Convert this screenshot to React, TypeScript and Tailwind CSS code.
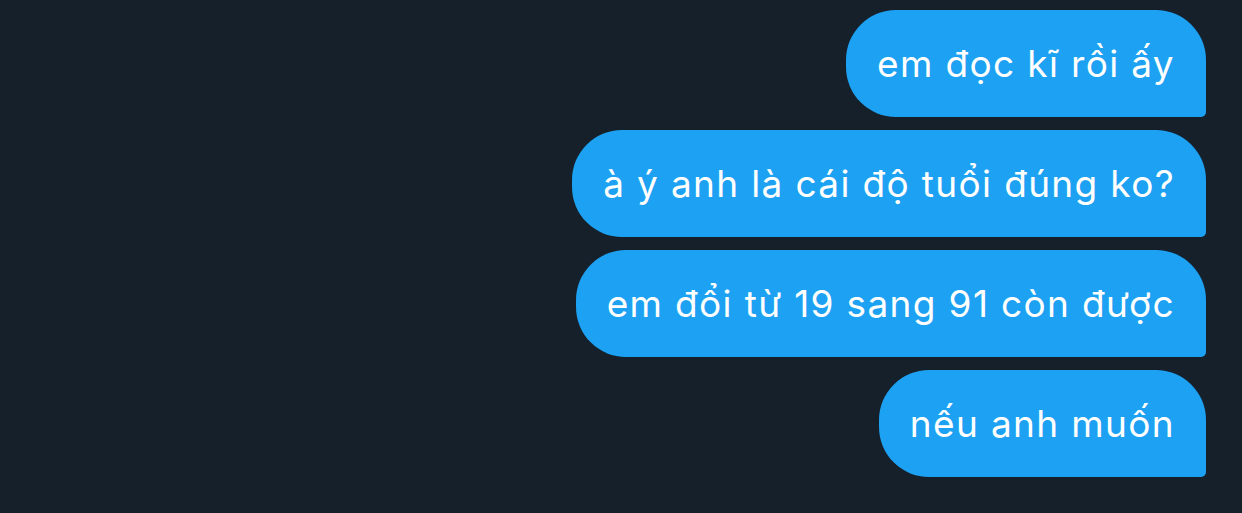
import React from 'react';

const messages = [
  'em đọc kĩ rồi ấy',
  'à ý anh là cái độ tuổi đúng ko?',
  'em đổi từ 19 sang 91 còn được',
  'nếu anh muốn',
];

export default function App() {
  return (
    <div className="min-h-screen w-full bg-[#15202b] pt-[10px] pr-[36px] font-['Inter','Noto_Sans',sans-serif]">
      <div className="flex flex-col items-end gap-[13px]">
        {messages.map((msg) => (
          <div
            key={msg}
            className="rounded-[50px] rounded-br-[5px] bg-[#1da1f2] pl-[31px] pr-[31px] py-[30px] text-[37px] leading-[47px] tracking-[1.35px] text-white"
          >
            {msg}
          </div>
        ))}
      </div>
    </div>
  );
}
